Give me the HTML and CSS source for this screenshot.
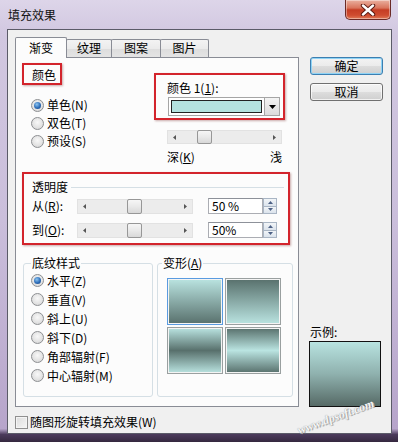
FILE: index.html
```html
<!DOCTYPE html>
<html>
<head>
<meta charset="utf-8">
<title>填充效果</title>
<link rel="stylesheet" href="styles.css">
</head>
<body>
<div class="window">
  <div class="titlebar">
    <span class="title">填充效果</span>
    <div class="close">
      <svg width="16" height="12" viewBox="0 0 16 12"><path d="M3 1.5 L13 10.5 M13 1.5 L3 10.5" stroke="#5a1a12" stroke-width="4.4" stroke-linecap="round"/><path d="M3 1.5 L13 10.5 M13 1.5 L3 10.5" stroke="#ffffff" stroke-width="2.4" stroke-linecap="round"/></svg>
    </div>
  </div>
  <div class="client">
    <div class="main">
      <div class="left">
        <div class="tabs">
          <div class="tab active t1">渐变</div>
          <div class="tab t2">纹理</div>
          <div class="tab t3">图案</div>
          <div class="tab t4">图片</div>
        </div>
        <div class="panel">
          <div class="sec-color">
            <div class="color-left">
              <div class="mark mark-label">颜色</div>
              <div class="radios">
                <div class="radio-row"><span class="radio checked"></span><span>单色(N)</span></div>
                <div class="radio-row"><span class="radio"></span><span>双色(T)</span></div>
                <div class="radio-row"><span class="radio"></span><span>预设(S)</span></div>
              </div>
            </div>
            <div class="color-right">
              <div class="mark mark-color1">
                <div class="lbl">颜色 1(<u>1</u>):</div>
                <div class="picker">
                  <div class="swatch"></div>
                  <div class="dd"><svg width="7" height="4" viewBox="0 0 7 4"><polygon points="0,0 7,0 3.5,4" fill="#000"/></svg></div>
                </div>
              </div>
              <div class="slider slider1">
                <span class="arr"><svg width="3" height="5" viewBox="0 0 3 5"><polygon points="3,0 3,5 0,2.5" fill="#555"/></svg></span>
                <span class="track"><span class="thumb" style="margin-left:16px"></span></span>
                <span class="arr"><svg width="3" height="5" viewBox="0 0 3 5"><polygon points="0,0 0,5 3,2.5" fill="#555"/></svg></span>
              </div>
              <div class="shade"><span>深(<u>K</u>)</span><span>浅</span></div>
            </div>
          </div>
          <div class="mark mark-trans">
            <div class="trans-title"><span>透明度</span><span class="gline"></span></div>
            <div class="trans-row">
              <span class="trans-label">从(<u>R</u>):</span>
              <div class="slider slider2">
                <span class="arr"><svg width="3" height="5" viewBox="0 0 3 5"><polygon points="3,0 3,5 0,2.5" fill="#555"/></svg></span>
                <span class="track"><span class="thumb" style="margin-left:36px"></span></span>
                <span class="arr"><svg width="3" height="5" viewBox="0 0 3 5"><polygon points="0,0 0,5 3,2.5" fill="#555"/></svg></span>
              </div>
              <div class="spin">
                <span class="spin-input">50 %</span>
                <span class="spin-btns">
                  <span class="sb"><svg width="5" height="3" viewBox="0 0 5 3"><polygon points="0,3 5,3 2.5,0" fill="#4d6185"/></svg></span>
                  <span class="sb"><svg width="5" height="3" viewBox="0 0 5 3"><polygon points="0,0 5,0 2.5,3" fill="#4d6185"/></svg></span>
                </span>
              </div>
            </div>
            <div class="trans-row row2">
              <span class="trans-label">到(<u>O</u>):</span>
              <div class="slider slider2">
                <span class="arr"><svg width="3" height="5" viewBox="0 0 3 5"><polygon points="3,0 3,5 0,2.5" fill="#555"/></svg></span>
                <span class="track"><span class="thumb" style="margin-left:36px"></span></span>
                <span class="arr"><svg width="3" height="5" viewBox="0 0 3 5"><polygon points="0,0 0,5 3,2.5" fill="#555"/></svg></span>
              </div>
              <div class="spin">
                <span class="spin-input">50%</span>
                <span class="spin-btns">
                  <span class="sb"><svg width="5" height="3" viewBox="0 0 5 3"><polygon points="0,3 5,3 2.5,0" fill="#4d6185"/></svg></span>
                  <span class="sb"><svg width="5" height="3" viewBox="0 0 5 3"><polygon points="0,0 5,0 2.5,3" fill="#4d6185"/></svg></span>
                </span>
              </div>
            </div>
          </div>
          <div class="groups">
            <fieldset class="group g1">
              <legend>底纹样式</legend>
              <div class="g-radios">
                <div class="radio-row r2"><span class="radio checked"></span><span>水平(Z)</span></div>
                <div class="radio-row r2"><span class="radio"></span><span>垂直(V)</span></div>
                <div class="radio-row r2"><span class="radio"></span><span>斜上(U)</span></div>
                <div class="radio-row r2"><span class="radio"></span><span>斜下(D)</span></div>
                <div class="radio-row r2"><span class="radio"></span><span>角部辐射(F)</span></div>
                <div class="radio-row r2"><span class="radio"></span><span>中心辐射(M)</span></div>
              </div>
            </fieldset>
            <fieldset class="group g2">
              <legend>变形(<u>A</u>)</legend>
              <div class="tiles">
                <div class="tile v1 sel"></div>
                <div class="tile v2"></div>
                <div class="tile v3"></div>
                <div class="tile v4"></div>
              </div>
            </fieldset>
          </div>
        </div>
      </div>
      <div class="right">
        <div class="btn default">确定</div>
        <div class="btn">取消</div>
        <div class="sample-label">示例:</div>
        <div class="sample"></div>
      </div>
    </div>
    <div class="bottom"><span class="checkbox"></span><span>随图形旋转填充效果(W)</span></div>
  </div>
  <div class="watermark">www.dpsoft.com</div>
</div>
</body>
</html>
```
FILE: styles.css
```css
* { box-sizing: border-box; }
html, body { margin: 0; padding: 0; }
body {
  width: 398px; height: 442px; overflow: hidden;
  font-family: "Noto Sans CJK SC", "Noto Sans", sans-serif;
  font-size: 12px; line-height: 14px; color: #000;
}
u { text-decoration: underline; text-underline-offset: 1px; }
.window {
  position: relative;
  width: 398px; height: 442px;
  display: flex; flex-direction: column;
  overflow: hidden;
  background: linear-gradient(180deg, #ddd5e9 0%, #d1c7e0 8%, #cabedb 50%, #b7a5cb 97%, #4b3a5b 98.3%, #35283f 100%);
}
.titlebar {
  flex: none; height: 29px;
  display: flex; justify-content: space-between; align-items: flex-start;
}
.title { padding: 8px 0 0 8px; line-height: 14px; color: #111; }
.close {
  width: 46px; height: 20px; margin-right: 7px;
  border: 1px solid #6a2a26; border-top: none;
  border-radius: 0 0 5px 5px;
  background: linear-gradient(180deg, #eab0a0 0%, #d9745c 42%, #c53d24 52%, #cf4c30 80%, #e07a58 100%);
  box-shadow: inset 0 0 0 1px rgba(255,255,255,0.4);
  display: flex; align-items: center; justify-content: center;
}
.client {
  flex: none;
  margin: 0 6px 0 7px; height: 405px;
  border: 1px solid #5b5b68;
  background: #f0f0f0;
  display: flex; flex-direction: column;
  padding: 7px 0 0 7px;
}
.main { display: flex; gap: 11px; }
.left { width: 284px; display: flex; flex-direction: column; }
.tabs { height: 20px; display: flex; align-items: flex-end; position: relative; z-index: 1; }
.tab {
  height: 18px; margin-left: -1px;
  border: 1px solid #898c95; border-bottom: none;
  border-radius: 2px 2px 0 0;
  background: linear-gradient(180deg, #f3f3f3 0%, #ebebeb 50%, #dddddd 51%, #e4e4e4 100%);
  text-align: center; line-height: 16px;
}
.tab.active {
  height: 21px; margin-bottom: -1px; margin-left: 0;
  background: #fcfcfc; padding-top: 2px; z-index: 2; position: relative;
}
.t1 { width: 52px; }
.t2 { width: 46px; }
.t3 { width: 50px; }
.t4 { width: 49px; }
.panel {
  height: 350px;
  border: 1px solid #898c95;
  background: #fcfcfc;
  padding: 5px 0 0 6px;
}
.mark {
  border: 2px solid #d3242c;
  box-shadow: 1px 1px 2px rgba(110, 20, 20, 0.35);
}
.sec-color { display: flex; height: 109px; }
.color-left { width: 132px; }
.mark-label { width: 40px; height: 22px; padding: 3px 0 0 8px; }
.radios { margin-top: 11px; display: flex; flex-direction: column; }
.radio-row { display: flex; align-items: center; height: 18px; gap: 3px; padding-left: 9px; }
.radio {
  width: 13px; height: 13px; border-radius: 50%;
  border: 1px solid #8d8f92;
  background: radial-gradient(circle at 50% 40%, #f8f8f8 0%, #e2e2e2 60%, #cfcfcf 100%);
  display: flex; align-items: center; justify-content: center;
  flex: none;
}
.radio.checked::after {
  content: ""; width: 7px; height: 7px; border-radius: 50%;
  background: radial-gradient(circle at 40% 35%, #8cc4f0 0%, #2d6db8 55%, #153f7c 100%);
}
.color-right { display: flex; flex-direction: column; padding-top: 10px; }
.mark-color1 { width: 131px; height: 47px; padding: 6px 0 0 11px; }
.picker {
  margin: 2px 0 0 1px; width: 112px; height: 19px;
  border: 1px solid #a5a5a5; background: #fff;
  display: flex; align-items: stretch; padding: 2px 0 2px 2px; gap: 2px;
}
.swatch { flex: 1; border: 1px solid #222; background: #b4e2df; }
.dd {
  width: 15px; margin: -2px 0 -2px 0;
  border-left: 1px solid #a5a5a5;
  background: linear-gradient(180deg, #f4f4f4, #dcdcdc);
  display: flex; align-items: center; justify-content: center;
}
.slider {
  height: 15px; display: flex; align-items: stretch;
  background: #ececec; border: 1px solid #e2e2e2;
}
.slider1 { margin: 10px 0 0 13px; width: 115px; height: 14px; }
.slider2 { width: 116px; }
.arr { width: 13px; display: flex; align-items: center; justify-content: center; }
.track { flex: 1; display: flex; align-items: stretch; margin: -1px 0; }
.thumb {
  width: 15px;
  border: 1px solid #979797; border-radius: 2px;
  background: linear-gradient(180deg, #f6f6f6 0%, #e9e9e9 50%, #d8d8d8 100%);
}
.shade { margin: 6px 0 0 13px; width: 115px; display: flex; justify-content: space-between; }
.mark-trans { width: 268px; height: 73px; padding: 6px 0 0 8px; }
.trans-title { display: flex; align-items: center; gap: 3px; }
.gline { flex: 1; height: 1px; background: #d5dfe5; margin-right: 4px; }
.trans-row { display: flex; align-items: center; height: 16px; margin-top: 4px; }
.trans-row.row2 { margin-top: 8px; }
.trans-label { width: 45px; }
.spin { margin-left: 15px; display: flex; height: 16px; }
.spin-input {
  width: 55px; height: 16px;
  border: 1px solid #abadb3; border-top-color: #8d9199;
  background: #fff; padding: 0 0 0 3px; line-height: 14px;
}
.spin-btns { width: 14px; display: flex; flex-direction: column; }
.sb {
  flex: 1; display: flex; align-items: center; justify-content: center;
  border: 1px solid #a9b5c4;
  background: linear-gradient(180deg, #f2f5f8, #dbe3ec);
}
.sb + .sb { border-top: none; }
.groups { display: flex; gap: 4px; margin: 11px 0 0 1px; }
.group {
  margin: 0; height: 141px; min-width: 0;
  border: 1px solid #d5dfe5; border-radius: 3px;
}
.group legend { padding: 0 1px; line-height: 14px; }
.g1 { width: 130px; padding: 0 0 0 7px; }
.g2 { width: 136px; padding: 0 0 0 4px; }
.g-radios { padding-top: 1px; display: flex; flex-direction: column; }
.radio-row.r2 { height: 19px; padding-left: 0; }
.tiles {
  margin: 8px 0 0 5px;
  display: grid; grid-template-columns: 56px 56px; grid-template-rows: 47px 47px; gap: 2px;
}
.tile { border: 1px solid #9aa0a0; box-shadow: inset 0 0 0 1px #f4f4f4; }
.tile.sel { border-color: #5a9be0; }
.v1 { background: linear-gradient(180deg, #bae4e1 0%, #58706c 100%); }
.v2 { background: linear-gradient(180deg, #58706c 0%, #bae4e1 100%); }
.v3 { background: linear-gradient(180deg, #bae4e1 0%, #58706c 50%, #bae4e1 100%); }
.v4 { background: linear-gradient(180deg, #58706c 0%, #bae4e1 50%, #58706c 100%); }
.right { width: 73px; display: flex; flex-direction: column; padding-top: 20px; }
.btn {
  height: 18px; text-align: center; line-height: 16px;
  border: 1px solid #707070; border-radius: 3px;
  background: linear-gradient(180deg, #f3f3f3 0%, #ebebeb 50%, #dddddd 51%, #cfcfcf 100%);
  box-shadow: inset 0 0 0 1px rgba(255,255,255,0.7);
}
.btn + .btn { margin-top: 8px; }
.btn.default { border-color: #3c7fb1; box-shadow: inset 0 0 0 1px #8fd3f5; }
.sample-label { margin-top: auto; margin-bottom: 2px; }
.sample {
  height: 66px; width: 72px; margin-left: -1px;
  border: 1px solid #111;
  background: linear-gradient(180deg, #b8e3e0 0%, #8fb1ae 50%, #566a66 100%);
}
.bottom { margin-top: 8px; display: flex; align-items: center; gap: 2px; height: 14px; }
.checkbox {
  width: 13px; height: 13px; flex: none;
  border: 1px solid #8f8f8f;
  background: linear-gradient(135deg, #dcdcdc, #f6f6f6);
  box-shadow: inset 0 0 0 1px #f4f4f4;
}
.watermark {
  position: absolute; left: 300px; top: 424px;
  font-family: "Liberation Serif", serif; font-style: italic; font-weight: bold;
  font-size: 12px; line-height: 12px; color: #f6f6f6;
  text-shadow: 0 0 1px #8a8a8a, 1px 1px 0 #b0b0b0;
  transform: rotate(-20deg); transform-origin: left bottom;
  white-space: nowrap;
}
```
